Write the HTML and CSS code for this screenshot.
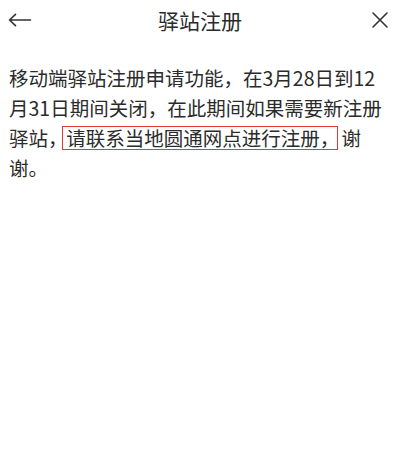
FILE: index.html
```html
<!DOCTYPE html>
<html lang="zh-CN">
<head>
<meta charset="utf-8">
<link rel="stylesheet" href="styles.css">
</head>
<body>
<div class="page">
  <header class="topbar">
    <span class="icon back" aria-label="返回">
      <svg width="24" height="16" viewBox="0 0 24 16"><path d="M22.5 8H1.5M7.5 2.3L1.5 8l6 5.7" fill="none" stroke="#333" stroke-width="1.6" stroke-linecap="round" stroke-linejoin="round"/></svg>
    </span>
    <h1 class="title">驿站注册</h1>
    <span class="icon close" aria-label="关闭">
      <svg width="16" height="16" viewBox="0 0 16 16"><path d="M1 1l14 14M15 1L1 15" fill="none" stroke="#333" stroke-width="1.6" stroke-linecap="round"/></svg>
    </span>
  </header>
  <main class="content">
    <p class="notice">移动端驿站注册申请功能，在3月28日到12月31日期间关闭，在此期间如果需要新注册驿站<span class="half">，</span><span class="mark">请联系当地圆通网点进行注册<span class="half">，</span></span>谢谢。</p>
  </main>
</div>
</body>
</html>
```

FILE: styles.css
```css
html, body {
  margin: 0;
  padding: 0;
  background: #fff;
}
.page {
  width: 400px;
  height: 462px;
  font-family: "Noto Sans CJK SC", "Noto Sans", sans-serif;
  color: #2b2b2b;
}
.topbar {
  height: 40px;
  display: flex;
  align-items: center;
  justify-content: space-between;
  padding: 0 8px 0 8px;
}
.icon {
  display: flex;
  align-items: center;
  justify-content: center;
  width: 24px;
  height: 24px;
}
.title {
  margin: 0;
  font-size: 21px;
  font-weight: normal;
  color: #2b2b2b;
}
.content {
  padding: 23px 8px 0 9px;
}
.notice {
  margin: 0;
  font-size: 19.5px;
  line-height: 30px;
}
.half {
  letter-spacing: -0.45em;
}
.mark {
  display: inline-block;
  line-height: 22px;
  border: 1.5px solid #e8363a;
  padding: 0 6px 0 3.5px;
  margin: 1px 4px 0 3px;
}
```
